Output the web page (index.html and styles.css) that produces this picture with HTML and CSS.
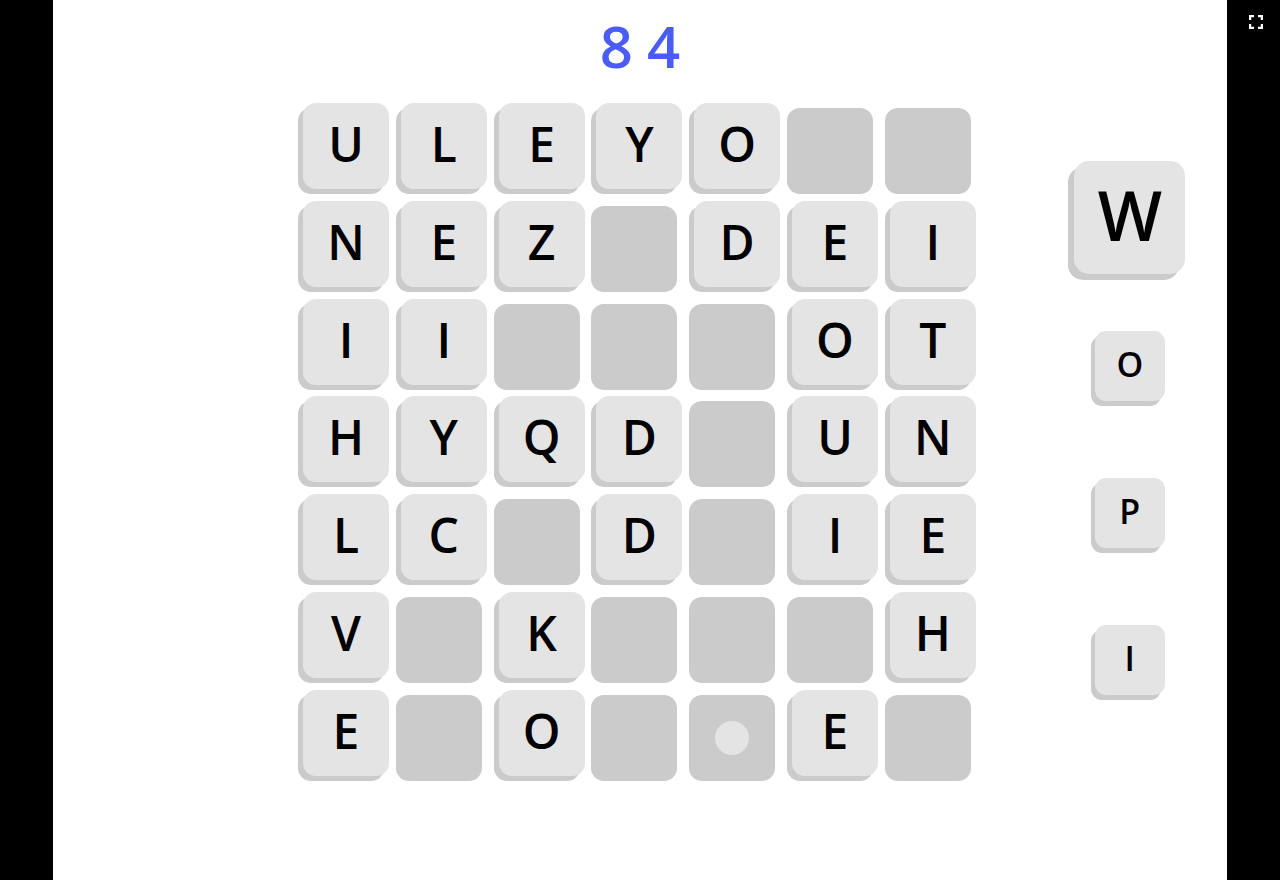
FILE: index.html
```html
<!DOCTYPE html>
<html>
<head>
<meta charset="utf-8">
<link rel="stylesheet" href="styles.css">
</head>
<body>
<div class="frame">
  <div class="stage">
    <div class="score">84</div>
    <div class="play">
      <div class="board">
        <div class="tile letter">U</div><div class="tile letter">L</div><div class="tile letter">E</div><div class="tile letter">Y</div><div class="tile letter">O</div><div class="tile"></div><div class="tile"></div>
        <div class="tile letter">N</div><div class="tile letter">E</div><div class="tile letter">Z</div><div class="tile"></div><div class="tile letter">D</div><div class="tile letter">E</div><div class="tile letter">I</div>
        <div class="tile letter">I</div><div class="tile letter">I</div><div class="tile"></div><div class="tile"></div><div class="tile"></div><div class="tile letter">O</div><div class="tile letter">T</div>
        <div class="tile letter">H</div><div class="tile letter">Y</div><div class="tile letter">Q</div><div class="tile letter">D</div><div class="tile"></div><div class="tile letter">U</div><div class="tile letter">N</div>
        <div class="tile letter">L</div><div class="tile letter">C</div><div class="tile"></div><div class="tile letter">D</div><div class="tile"></div><div class="tile letter">I</div><div class="tile letter">E</div>
        <div class="tile letter">V</div><div class="tile"></div><div class="tile letter">K</div><div class="tile"></div><div class="tile"></div><div class="tile"></div><div class="tile letter">H</div>
        <div class="tile letter">E</div><div class="tile"></div><div class="tile letter">O</div><div class="tile"></div><div class="tile"><span class="dot"></span></div><div class="tile letter">E</div><div class="tile"></div>
      </div>
      <div class="rack">
        <div class="slot"><div class="piece big">W</div></div>
        <div class="slot"><div class="piece">O</div></div>
        <div class="slot"><div class="piece">P</div></div>
        <div class="slot"><div class="piece">I</div></div>
      </div>
    </div>
  </div>
  <div class="side">
    <svg class="fs" width="14" height="14" viewBox="0 0 14 14" fill="none" stroke="#fff" stroke-width="2.4">
      <path d="M1 5V1h4M9 1h4v4M13 9v4H9M5 13H1V9"/>
    </svg>
  </div>
</div>
</body>
</html>
```

FILE: styles.css
```css
html, body {
  margin: 0;
  padding: 0;
  background: #000;
}
.frame {
  display: flex;
  justify-content: center;
  width: 1280px;
  height: 880px;
  position: relative;
}
.stage {
  width: 1174px;
  height: 880px;
  background: #fff;
  font-family: "Open Sans", "DejaVu Sans", sans-serif;
}
.score {
  height: 108px;
  box-sizing: border-box;
  padding-top: 10px;
  text-align: center;
  font-size: 58px;
  font-weight: 600;
  line-height: 72px;
  letter-spacing: 14px;
  text-indent: 14px;
  color: #4b5cf6;
}
.play {
  display: flex;
  align-items: flex-start;
  padding-left: 245px;
}
.board {
  display: grid;
  grid-template-columns: repeat(7, 86px);
  grid-auto-rows: 86px;
  column-gap: 11.8px;
  row-gap: 11.8px;
}
.tile {
  background: #cbcbcb;
  border-radius: 13px;
  display: flex;
  align-items: center;
  justify-content: center;
}
.letter {
  background: #e4e4e4;
  transform: translate(5px, -5px);
  box-shadow: -5px 5px 0 #cbcbcb;
  font-size: 48px;
  font-weight: 600;
  color: #000;
  box-sizing: border-box;
  padding-bottom: 5px;
}
.dot {
  width: 34px;
  height: 34px;
  border-radius: 50%;
  background: #e4e4e4;
}
.rack {
  margin-left: 96px;
  margin-top: 38px;
  width: 120px;
  display: flex;
  flex-direction: column;
}
.slot {
  height: 147px;
  display: flex;
  align-items: center;
  justify-content: center;
}
.piece {
  width: 70px;
  height: 70px;
  box-sizing: border-box;
  padding-bottom: 4px;
  background: #e4e4e4;
  border-radius: 11px;
  box-shadow: -4px 5px 0 #cbcbcb;
  display: flex;
  align-items: center;
  justify-content: center;
  font-size: 34px;
  font-weight: 600;
  color: #000;
  transform: translate(3px, -1px);
}
.piece.big {
  width: 111px;
  height: 113px;
  padding-bottom: 6px;
  border-radius: 15px;
  box-shadow: -6px 6px 0 #cbcbcb;
  font-size: 68px;
  transform: translate(3px, -2px);
}
.side {
  position: absolute;
  right: 0;
  top: 0;
  width: 53px;
  height: 880px;
}
.fs {
  position: absolute;
  left: 22px;
  top: 15px;
}
```
